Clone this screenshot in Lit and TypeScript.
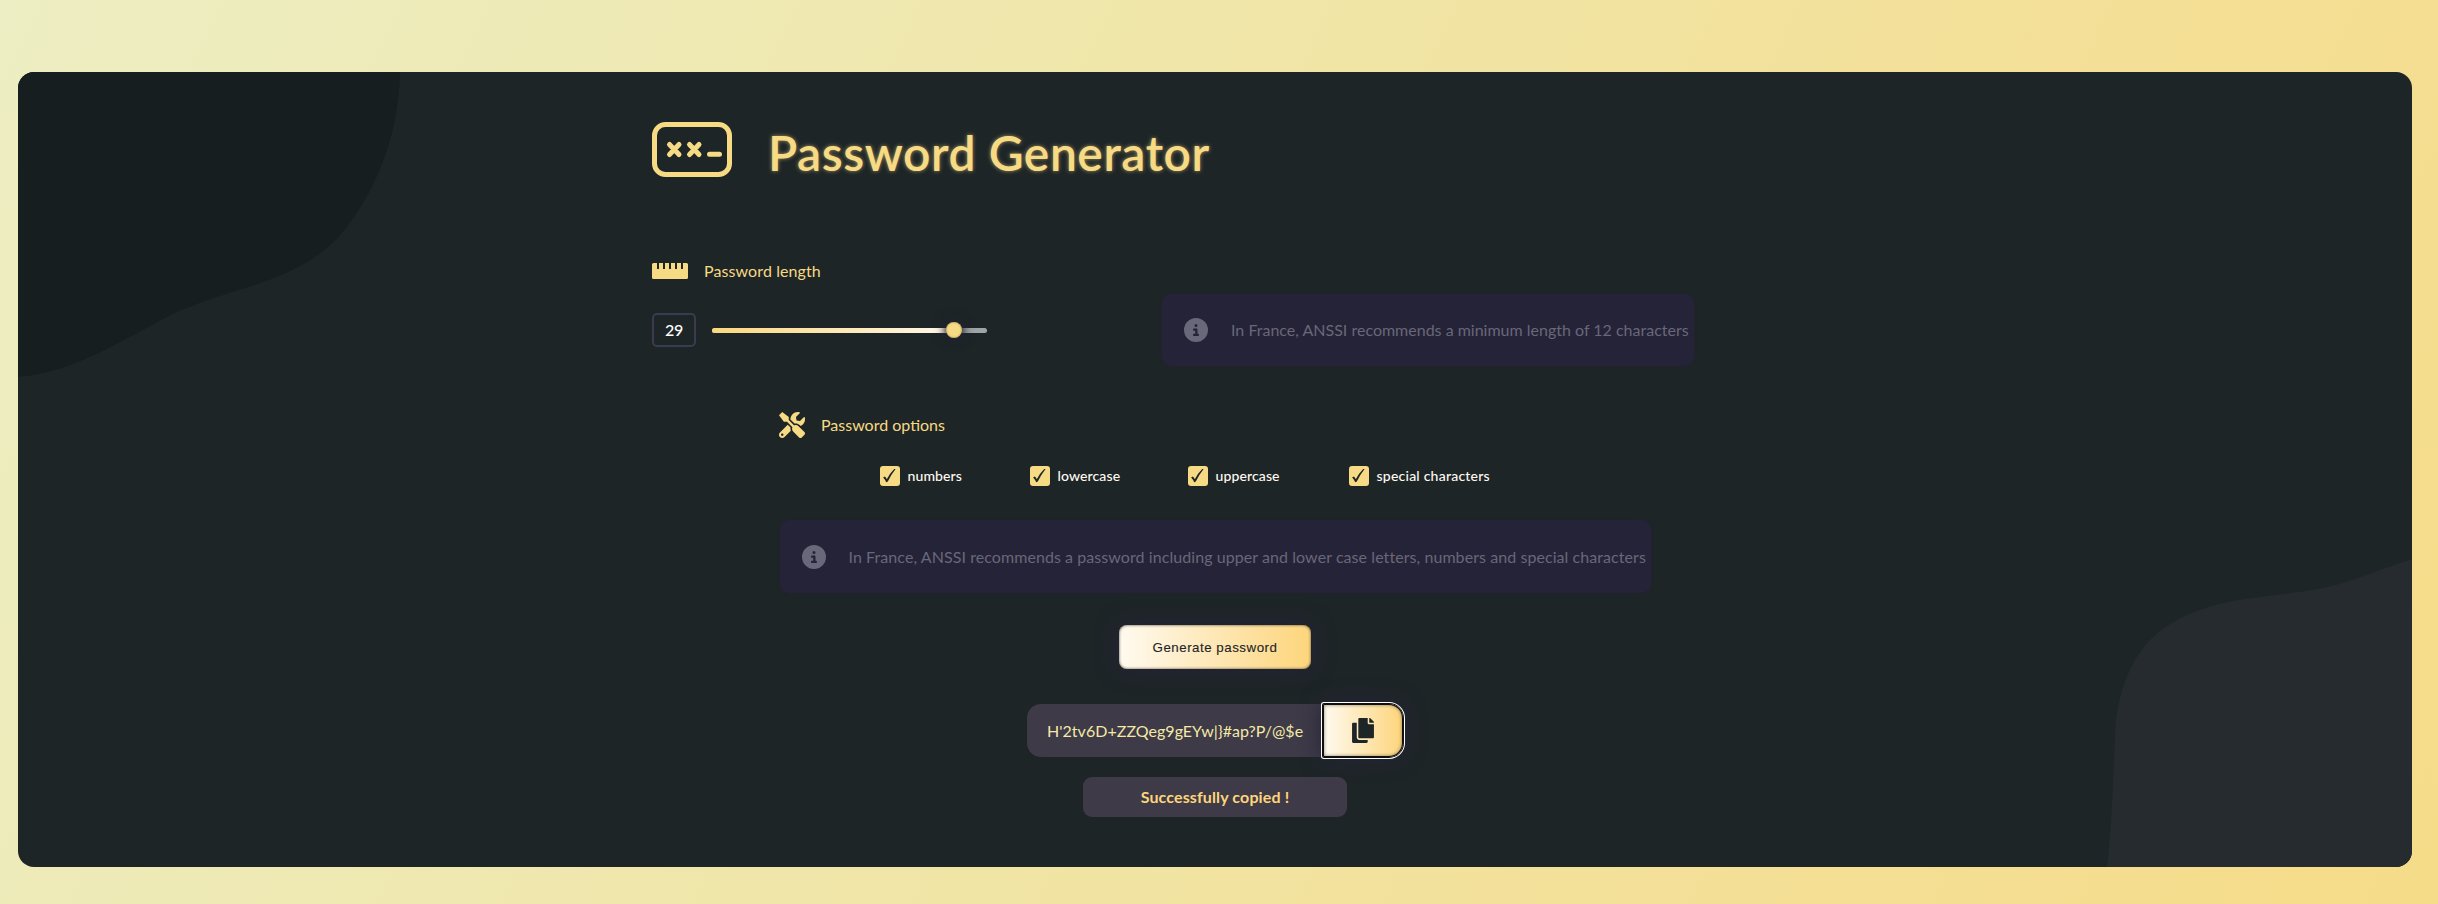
import { LitElement, html, css, svg } from "lit";
import { customElement, property, state } from "lit/decorators.js";

const icons = {
  info: svg`<path d="M256 512A256 256 0 1 0 256 0a256 256 0 1 0 0 512zM216 336h24V272H216c-13.3 0-24-10.7-24-24s10.7-24 24-24h48c13.3 0 24 10.7 24 24v88h8c13.3 0 24 10.7 24 24s-10.7 24-24 24H216c-13.3 0-24-10.7-24-24s10.7-24 24-24zm40-208a32 32 0 1 1 0 64 32 32 0 1 1 0-64z"/>`,
  tools: svg`<path d="M501.1 395.7L384 278.6c-23.1-23.1-57.6-27.6-85.4-13.9L192 158.1V96L64 0 0 64l96 128h62.1l106.6 106.6c-13.6 27.8-9.2 62.3 13.9 85.4l117.1 117.1c14.6 14.6 38.2 14.6 52.7 0l52.7-52.7c14.5-14.6 14.5-38.2 0-52.7zM331.7 225c28.3 0 54.9 11 74.9 31l19.4 19.4c15.8-6.9 30.8-16.5 43.8-29.5 37.1-37.1 49.7-89.3 37.9-136.7-2.2-9-13.5-12.1-20.1-5.5l-74.4 74.4-67.9-11.3L334 98.9l74.4-74.4c6.6-6.6 3.4-17.9-5.7-20.2-47.4-11.7-99.6.9-136.6 37.9-28.5 28.5-41.9 66.1-41.2 103.6l82.1 82.1c8.1-1.9 16.5-2.9 24.7-2.9zm-103.9 82l-56.7-56.7L18.7 402.8c-25 25-25 65.5 0 90.5s65.5 25 90.5 0l123.6-123.6c-7.6-19.9-9.9-41.6-5-62.7zM64 472c-13.2 0-24-10.8-24-24 0-13.3 10.7-24 24-24s24 10.7 24 24c0 13.2-10.7 24-24 24z"/>`,
  copy: svg`<path d="M320 448v40c0 13.255-10.745 24-24 24H24c-13.255 0-24-10.745-24-24V120c0-13.255 10.745-24 24-24h72v296c0 30.879 25.121 56 56 56h168zm0-344V0H152c-13.255 0-24 10.745-24 24v368c0 13.255 10.745 24 24 24h272c13.255 0 24-10.745 24-24V128H344c-13.2 0-24-10.8-24-24zm120.971-31.029L375.029 7.029A24 24 0 0 0 358.059 0H352v96h96v-6.059a24 24 0 0 0-7.029-16.97z"/>`,
};

@customElement("info-note")
class InfoNote extends LitElement {
  @property() text = "";

  static styles = css`
    :host {
      display: flex;
      align-items: center;
      box-sizing: border-box;
      height: 72px;
      padding-left: 22px;
      gap: 23px;
      border-radius: 10px;
      background: #252337;
      box-shadow: 0 0 3px #252337;
      color: #69677a;
      font-size: 16px;
      font-weight: 400;
      line-height: 20px;
      white-space: nowrap;
    }
    .icon {
      flex: none;
      width: 24px;
      height: 24px;
      fill: currentColor;
    }
  `;

  render() {
    return html`<svg class="icon" viewBox="0 0 512 512">${icons.info}</svg><span>${this.text}</span>`;
  }
}

@customElement("check-option")
class CheckOption extends LitElement {
  @property() label = "";

  static styles = css`
    :host {
      display: flex;
      align-items: center;
      gap: 8px;
      color: #fffaf0;
      font-size: 14px;
      font-weight: 500;
      line-height: 20px;
      white-space: nowrap;
    }
    .box {
      flex: none;
      width: 20px;
      height: 20px;
      border-radius: 3px;
      background: #f7da84;
    }
    .mark {
      display: block;
      fill: #1e2527;
    }
  `;

  render() {
    return html`
      <span class="box">
        <svg class="mark" width="20" height="20" viewBox="0 0 20 20">
          <path d="M3.1 11.6 L4.9 10.5 Q6.1 11.6 6.8 13.3 Q9.8 7.2 14.2 2.9 L15.6 2.9 Q11 8.6 7.8 15.6 L6.1 16.2 Q5 13.4 3.1 11.6Z" />
        </svg>
      </span>
      <span>${this.label}</span>
    `;
  }
}

@customElement("app-root")
class AppRoot extends LitElement {
  @state() length = 29;
  @state() password = "H'2tv6D+ZZQeg9gEYw|}#ap?P/@$e";
  private options = ["numbers", "lowercase", "uppercase", "special characters"];

  static styles = css`
    :host {
      display: block;
      box-sizing: border-box;
      min-height: 904px;
      padding: 72px 26px 37px 18px;
      background: linear-gradient(115deg, #edeec3 0%, #eeeab6 20%, #f1e4a3 52%, #f4df96 76%, #f5dc89 100%);
      font-family: Lato, sans-serif;
      color: #f7da84;
    }
    .card {
      position: relative;
      box-sizing: border-box;
      height: 795px;
      padding-top: 50px;
      overflow: hidden;
      border-radius: 16px;
      background: #1e2527;
    }
    .blob {
      position: absolute;
    }
    .blob.start {
      top: 0;
      left: 0;
      fill: #171e20;
    }
    .blob.end {
      right: 0;
      bottom: 0;
      fill: #252b2e;
    }
    .content {
      position: relative;
      width: 1126px;
      margin: 0 auto;
    }
    .head {
      display: flex;
      gap: 36px;
      height: 58px;
    }
    h1 {
      margin: 0;
      font-size: 48px;
      font-weight: 600;
      line-height: 61px;
      letter-spacing: 0.55px;
      text-shadow: 0 0 4px rgba(247, 218, 132, 0.6);
    }
    .label {
      display: flex;
      align-items: center;
      font-size: 16px;
      font-weight: 400;
      line-height: 20px;
    }
    .label.size {
      gap: 16px;
      margin-top: 81px;
      height: 20px;
      letter-spacing: 0.1px;
    }
    .label.opts {
      gap: 16px;
      height: 26px;
      margin-left: -0.5px;
    }
    .yellow {
      fill: #f7da84;
    }
    .length {
      display: flex;
      align-items: center;
      margin-top: 13px;
    }
    .value {
      box-sizing: border-box;
      width: 44px;
      height: 34px;
      border: 2px solid #3c3b4e;
      border-radius: 5px;
      color: #fff;
      font-size: 16px;
      font-weight: 500;
      line-height: 30px;
      text-align: center;
      letter-spacing: -0.3px;
    }
    .slider {
      position: relative;
      width: 275px;
      height: 5px;
      margin-left: 16px;
      border-radius: 3px;
      background: #a1a4a6;
    }
    .fill {
      height: 5px;
      border-radius: 3px 0 0 3px;
      background: linear-gradient(90deg, #fbd87f, #fff8ea);
    }
    .thumb {
      position: absolute;
      top: -5.5px;
      width: 16px;
      height: 16px;
      margin-left: -8px;
      border-radius: 50%;
      background: #f7da84;
      box-shadow: 0 0 12px 2px #24243380, 0 0 8px 1px #1e2230, inset 0 0 2px #8a7846;
    }
    .length info-note {
      width: 532px;
      margin-left: 175px;
      letter-spacing: 0;
    }
    .options {
      width: 871px;
      margin: 46px auto 0;
    }
    .checks {
      display: grid;
      grid-template-columns: 150px 158px 161px auto;
      margin: 28px 0 34px 100px;
    }
    .checks check-option {
      letter-spacing: 0.12px;
    }
    .checks check-option:last-child {
      letter-spacing: 0.23px;
    }
    .options info-note {
      height: 73px;
      letter-spacing: 0.07px;
    }
    .actions {
      display: flex;
      flex-direction: column;
      align-items: center;
    }
    .generate {
      box-sizing: border-box;
      width: 192px;
      height: 44px;
      margin: 32px 0 35px;
      padding: 0;
      border: 0;
      border-radius: 8px;
      background: linear-gradient(90deg, #fffaf0, #fdd57b);
      box-shadow: 0 0 20px 2px #242438, inset 0 0 3px #4d4534;
      color: #1e2527;
      font: 500 13.333px "Liberation Sans", Arial, sans-serif;
      letter-spacing: 0.5px;
      -webkit-text-stroke: 0.12px #1e2527;
    }
    .output {
      display: flex;
      height: 53px;
    }
    .password {
      box-sizing: border-box;
      width: 296px;
      padding-left: 20px;
      border-radius: 14px 0 0 14px;
      background: #3e3a48;
      color: #f4e9a7;
      font-size: 16px;
      line-height: 53px;
      letter-spacing: 0.03px;
      white-space: nowrap;
    }
    .copy {
      display: flex;
      align-items: center;
      justify-content: center;
      width: 80px;
      padding: 0;
      border: 0;
      border-radius: 1px 14px 14px 1px;
      background: linear-gradient(90deg, #fffaf0, #fdd57b);
      box-shadow: inset 0 0 0 1px #101010, 0 0 0 1px #101010, 0 0 0 2px #fff,
        0 0 20px 2px #242438, inset 0 0 4px #4d4534;
      fill: #1e2527;
    }
    .toast {
      width: 264px;
      height: 40px;
      margin-top: 20px;
      border-radius: 9px;
      background: #3e3a48;
      color: #fdd57b;
      font-size: 16px;
      font-weight: 700;
      line-height: 40px;
      text-align: center;
      letter-spacing: 0.13px;
    }
  `;

  render() {
    const pct = (this.length / 33) * 100;
    return html`
      <main class="card">
        <svg class="blob start" width="384" height="306" viewBox="0 0 384 306">
          <path d="M0 0H382C381 58 362 112 328 156C286 210 222 212 157 241C110 264 60 300 0 305Z" />
        </svg>
        <svg class="blob end" width="306" height="308" viewBox="0 0 306 308">
          <path d="M306 0C276 9 246 24 212 30C184 35 155 37 127 42C95 48 66 60 46 79C24 101 10 136 9 178C7 220 6 265 1 308H306Z" />
        </svg>
        <div class="content">
          <header class="head">
            <svg width="80" height="55" viewBox="0 0 80 55" fill="none" stroke="#f7da84" stroke-width="5" stroke-linecap="round">
              <rect x="2.5" y="2.5" width="75" height="50" rx="11" />
              <path d="M17.5 22.5l9.5 10M27 22.5l-9.5 10M37.5 22.5l9.5 10M47 22.5l-9.5 10M57.5 32.2h10" />
            </svg>
            <h1>Password Generator</h1>
          </header>

          <div class="label size">
            <svg class="yellow" width="36" height="16" viewBox="0 0 36 16">
              <path d="M1.5 0H5V6H7V0H11V6H13V0H17V6H19V0H23V6H25V0H29V6H31V0H34.5Q36 0 36 1.5V14.5Q36 16 34.5 16H1.5Q0 16 0 14.5V1.5Q0 0 1.5 0Z" />
            </svg>
            <span>Password length</span>
          </div>
          <div class="length">
            <div class="value">${this.length}</div>
            <div class="slider">
              <div class="fill" style="width:${pct}%"></div>
              <div class="thumb" style="left:${pct}%"></div>
            </div>
            <info-note text="In France, ANSSI recommends a minimum length of 12 characters"></info-note>
          </div>

          <section class="options">
            <div class="label opts">
              <svg class="yellow" width="26" height="26" viewBox="0 0 512 512">${icons.tools}</svg>
              <span>Password options</span>
            </div>
            <div class="checks">
              ${this.options.map((o) => html`<check-option label=${o}></check-option>`)}
            </div>
            <info-note
              text="In France, ANSSI recommends a password including upper and lower case letters, numbers and special characters"
            ></info-note>
          </section>

          <section class="actions">
            <button class="generate">Generate password</button>
            <div class="output">
              <div class="password">${this.password}</div>
              <button class="copy" aria-label="Copy">
                <svg width="22" height="25" viewBox="0 0 448 512">${icons.copy}</svg>
              </button>
            </div>
            <div class="toast">Successfully copied !</div>
          </section>
        </div>
      </main>
    `;
  }
}
